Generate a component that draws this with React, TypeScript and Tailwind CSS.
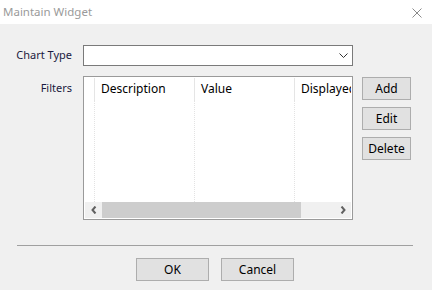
export default function App() {
  const cols = [
    { w: "w-[100px]", label: "Description" },
    { w: "w-[100px]", label: "Value" },
    { w: "w-[100px]", label: "Displayed" },
  ];
  return (
    <div className="w-[432px] h-[290px] flex flex-col bg-[#f0f0f0] text-[12px] text-black overflow-hidden font-['Noto_Sans',sans-serif]">
      <div className="h-[24px] bg-white flex items-center justify-between pl-[3px] pr-[10px] shrink-0">
        <span className="text-[#9a9a9a] leading-none text-[11.5px]">Maintain Widget</span>
        <svg width="10" height="10" viewBox="0 0 10 10" className="mt-[1px]">
          <path d="M0.5 0.5 L9.5 9.5 M9.5 0.5 L0.5 9.5" stroke="#8a8a8a" strokeWidth="1" fill="none" />
        </svg>
      </div>
      <div className="flex flex-col pt-[21px]">
        <div className="flex items-center h-[21px]">
          <div className="w-[73px] text-right pr-[1px] text-[#1a1a40] text-[11px]">Chart Type</div>
          <div className="ml-[10px] w-[270px] h-[21px] bg-white border border-[#7a7a7a] flex items-center justify-end pr-[4px]">
            <svg width="9" height="5" viewBox="0 0 9 5">
              <path d="M0.5 0.5 L4.5 4.5 L8.5 0.5" stroke="#333" strokeWidth="1" fill="none" />
            </svg>
          </div>
        </div>
        <div className="flex mt-[10px]">
          <div className="w-[73px] text-right pr-[1px] pt-[3px] text-[#1a1a40] leading-[18px] text-[11px]">Filters</div>
          <div className="ml-[10px] w-[270px] h-[144px] border border-[#9a9a9a] bg-white p-[1px] flex flex-col">
            <div className="flex-1 flex overflow-hidden">
              <div className="w-[9px] shrink-0" />
              {cols.map((c) => (
                <div key={c.label} className={`${c.w} shrink-0 flex flex-col`}>
                  <div className="h-[22px] border-l border-[#e5e5e5] pl-[6px] flex items-center whitespace-nowrap overflow-hidden">
                    {c.label}
                  </div>
                  <div className="flex-1 border-l border-dotted border-[#e3e3e3]" />
                </div>
              ))}
            </div>
            <div className="h-[16px] bg-[#f0f0f0] flex items-center shrink-0">
              <div className="w-[17px] h-full flex items-center justify-center">
                <svg width="6" height="8" viewBox="0 0 6 8">
                  <path d="M4.5 0.5 L1.5 4 L4.5 7.5" stroke="#606060" strokeWidth="2" fill="none" />
                </svg>
              </div>
              <div className="w-[199px] h-full bg-[#cdcdcd]" />
              <div className="flex-1" />
              <div className="w-[17px] h-full flex items-center justify-center">
                <svg width="6" height="8" viewBox="0 0 6 8">
                  <path d="M1.5 0.5 L4.5 4 L1.5 7.5" stroke="#606060" strokeWidth="2" fill="none" />
                </svg>
              </div>
            </div>
          </div>
          <div className="ml-[9px] flex flex-col gap-[7px] pt-[1px]">
            {["Add", "Edit", "Delete"].map((b) => (
              <div key={b} className="w-[49px] h-[23px] bg-[#e1e1e1] border border-[#adadad] flex items-center justify-center">
                {b}
              </div>
            ))}
          </div>
        </div>
        <div className="ml-[17px] w-[396px] h-px bg-[#a0a0a0] mt-[25px]" />
        <div className="flex mt-[12px] ml-[136px] gap-[12px]">
          {["OK", "Cancel"].map((b) => (
            <div key={b} className="w-[73px] h-[23px] bg-[#e1e1e1] border border-[#adadad] flex items-center justify-center">
              {b}
            </div>
          ))}
        </div>
      </div>
    </div>
  );
}
